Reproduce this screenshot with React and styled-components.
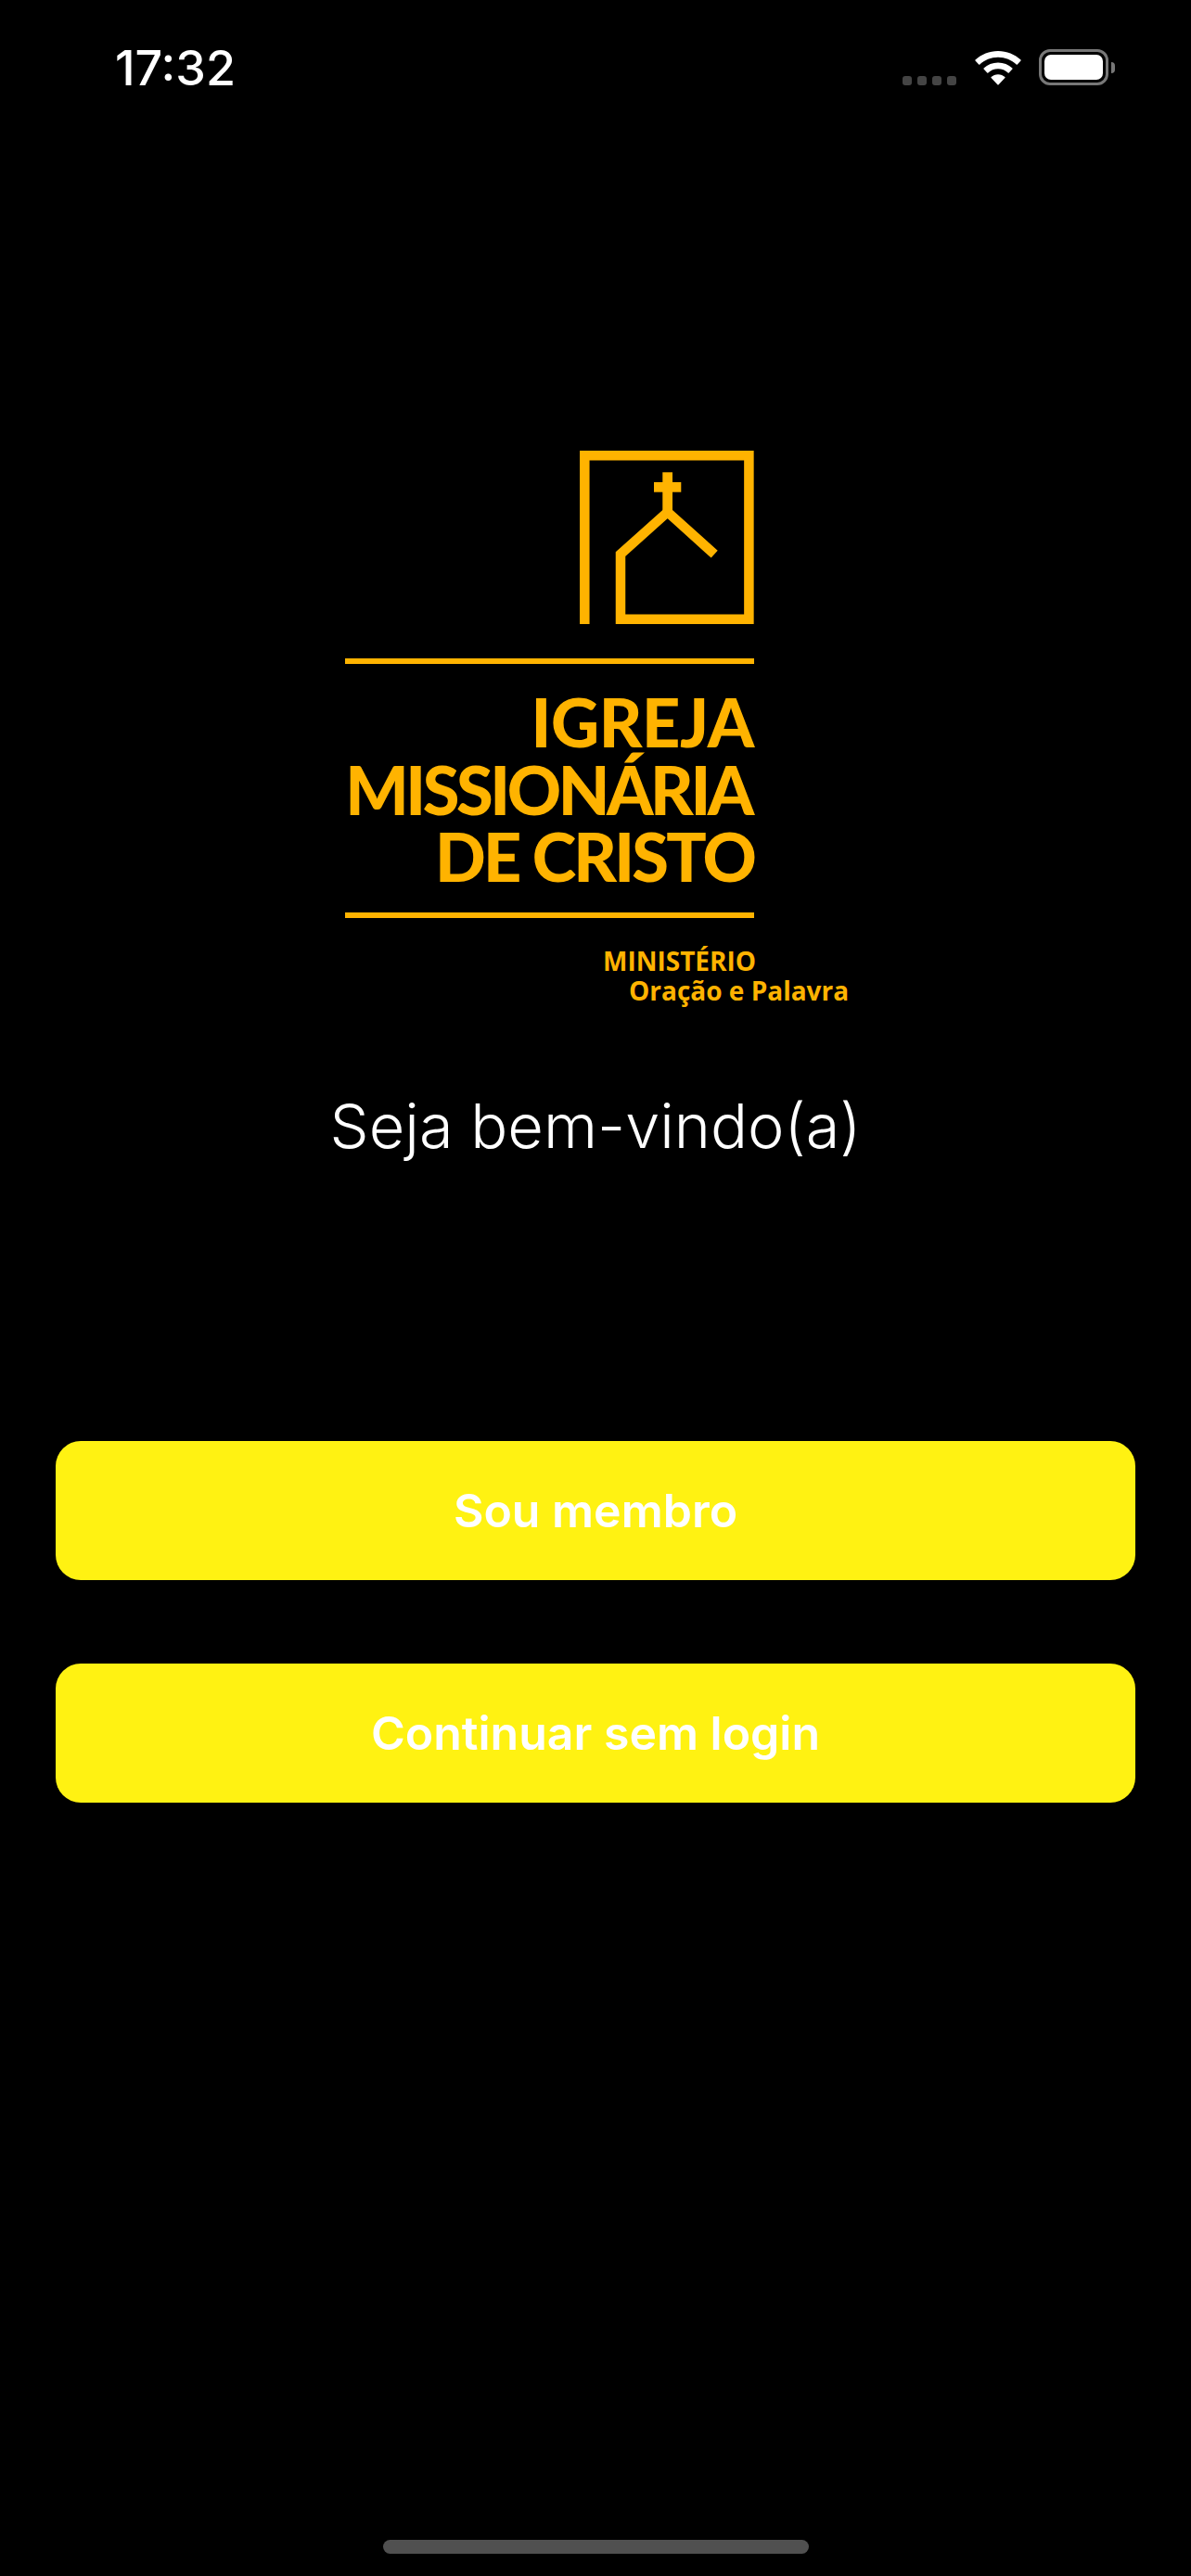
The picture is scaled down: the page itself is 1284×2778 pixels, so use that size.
import styled, { createGlobalStyle } from "styled-components";

const GlobalStyle = createGlobalStyle`
    html, body {
        margin: 0;
        padding: 0;
        background: #000;
    }
`;

const GOLD = "#ffb300";

export default function App() {
    return (
        <Screen>
            <GlobalStyle />
            <StatusBar>
                <Time>17:32</Time>
                <StatusIcons>
                    <Signal>
                        <i />
                        <i />
                        <i />
                        <i />
                    </Signal>
                    <WifiIcon />
                    <Battery>
                        <BatteryFill />
                    </Battery>
                </StatusIcons>
            </StatusBar>

            <Logo>
                <ChurchMark />
                <Rule />
                <LogoTitle>
                    <TitleLine $tracking="-0.4px">IGREJA</TitleLine>
                    <TitleLine $tracking="-3.400px" $inset="3px">
                        MISSIONÁRIA
                    </TitleLine>
                    <TitleLine $tracking="-2.800px">DE CRISTO</TitleLine>
                </LogoTitle>
                <Rule />
                <Tagline>
                    <span>MINISTÉRIO</span>
                    <TaglineSub>Oração e Palavra</TaglineSub>
                </Tagline>
            </Logo>

            <Welcome>Seja bem-vindo(a)</Welcome>

            <Actions>
                <ActionButton>Sou membro</ActionButton>
                <ActionButton>Continuar sem login</ActionButton>
            </Actions>

            <HomeIndicator />
        </Screen>
    );
}

function WifiIcon() {
    return (
        <svg width="50" height="37" viewBox="0 0 50 37" fill="#fff">
            <path d="M25 0C15.6 0 7 3.6 0.5 9.6C0.2 9.9 0.2 10.3 0.5 10.6L4.2 14.4C4.5 14.7 5 14.7 5.3 14.4C10.5 9.6 17.4 6.7 25 6.7C32.6 6.7 39.5 9.6 44.7 14.4C45 14.7 45.5 14.7 45.8 14.4L49.5 10.6C49.8 10.3 49.8 9.9 49.5 9.6C43 3.6 34.4 0 25 0Z" />
            <path d="M25 12.6C19.1 12.6 13.7 14.8 9.6 18.6C9.3 18.9 9.3 19.3 9.6 19.6L13.3 23.4C13.6 23.7 14 23.7 14.3 23.4C17.1 20.9 20.9 19.3 25 19.3C29.1 19.3 32.9 20.9 35.7 23.4C36 23.7 36.4 23.7 36.7 23.4L40.4 19.6C40.7 19.3 40.7 18.9 40.4 18.6C36.3 14.8 30.9 12.6 25 12.6Z" />
            <path d="M25 25.2C22.1 25.2 19.5 26.3 17.6 28.1C17.3 28.4 17.3 28.8 17.6 29.1L24.4 36.2C24.7 36.6 25.3 36.6 25.6 36.2L32.4 29.1C32.7 28.8 32.7 28.4 32.4 28.1C30.5 26.3 27.9 25.2 25 25.2Z" />
        </svg>
    );
}

function ChurchMark() {
    return (
        <MarkSvg width="188" height="187" viewBox="0 0 188 187" fill="none">
            <g stroke={GOLD} strokeWidth="10.500" strokeLinejoin="miter">
                <path d="M5.300 187V5.250H182.400V181.750H44V111.700L94.700 66.200L145.200 111.700" />
                <path d="M94.650 23.300V70" strokeWidth="10.700" />
                <path d="M80 39.350H109.300" strokeWidth="10.700" />
            </g>
        </MarkSvg>
    );
}

const Screen = styled.div`
    position: relative;
    width: 1284px;
    height: 2778px;
    overflow: hidden;
    background: #000;
    color: #fff;
    font-family: Inter, "Liberation Sans", sans-serif;
`;

const StatusBar = styled.div`
    display: flex;
    align-items: flex-start;
    justify-content: space-between;
    height: 486px;
    box-sizing: border-box;
    padding: 42px 89px 0 124px;
`;

const Time = styled.div`
    margin-top: 2px;
    font-size: 52px;
    font-weight: 500;
    line-height: 60px;
`;

const StatusIcons = styled.div`
    display: flex;
    align-items: flex-end;
    gap: 19px;
    padding-top: 11px;
`;

const Signal = styled.div`
    display: flex;
    gap: 6px;
    margin-right: 1px;
    & i {
        display: block;
        width: 10px;
        height: 10px;
        border-radius: 3px;
        background: #444;
    }
`;

const Battery = styled.div`
    position: relative;
    width: 75px;
    height: 39px;
    box-sizing: border-box;
    border: 3px solid #777;
    border-radius: 12px;
    padding: 3px;
    &::after {
        content: "";
        position: absolute;
        right: -10px;
        top: 11px;
        width: 4px;
        height: 12px;
        border-radius: 0 6px 6px 0;
        background: #777;
    }
`;

const BatteryFill = styled.div`
    height: 100%;
    border-radius: 7px;
    background: #fff;
`;

const Logo = styled.div`
    display: flex;
    flex-direction: column;
    align-items: flex-end;
    width: 441px;
    margin-left: 372px;
`;

const MarkSvg = styled.svg`
    display: block;
    margin-bottom: 37px;
`;

const Rule = styled.div`
    flex: none;
    width: 100%;
    height: 6px;
    background: ${GOLD};
`;

const LogoTitle = styled.div`
    display: flex;
    flex-direction: column;
    align-items: flex-end;
    padding: 26px 0 24.500px;
    color: ${GOLD};
    font-family: Lato, sans-serif;
    font-size: 72px;
    font-weight: 900;
    line-height: 72.500px;
    white-space: nowrap;
`;

const TitleLine = styled.span`
    margin-right: ${(p) => p.$inset || 0};
    letter-spacing: ${(p) => p.$tracking};
`;

const Tagline = styled.div`
    display: flex;
    flex-direction: column;
    align-self: flex-start;
    margin: 30px 0 0 278px;
    color: ${GOLD};
    font-family: "Open Sans", sans-serif;
    font-size: 28px;
    font-weight: 700;
    line-height: 32px;
    white-space: nowrap;
`;

const TaglineSub = styled.span`
    padding-left: 28px;
`;

const Welcome = styled.div`
    margin-top: 90px;
    text-align: center;
    font-size: 66.600px;
    font-weight: 350;
    line-height: 80px;
`;

const Actions = styled.div`
    display: flex;
    flex-direction: column;
    gap: 90px;
    margin-top: 300px;
    padding: 0 60px;
`;

const ActionButton = styled.button`
    display: block;
    width: 100%;
    height: 150px;
    border: 0;
    border-radius: 27px;
    background: #fff212;
    color: #fff;
    font-family: Inter, "Liberation Sans", sans-serif;
    font-size: 50px;
    font-weight: 600;
`;

const HomeIndicator = styled.div`
    position: absolute;
    left: 413px;
    bottom: 24px;
    width: 459px;
    height: 15px;
    border-radius: 8px;
    background: #505050;
`;
